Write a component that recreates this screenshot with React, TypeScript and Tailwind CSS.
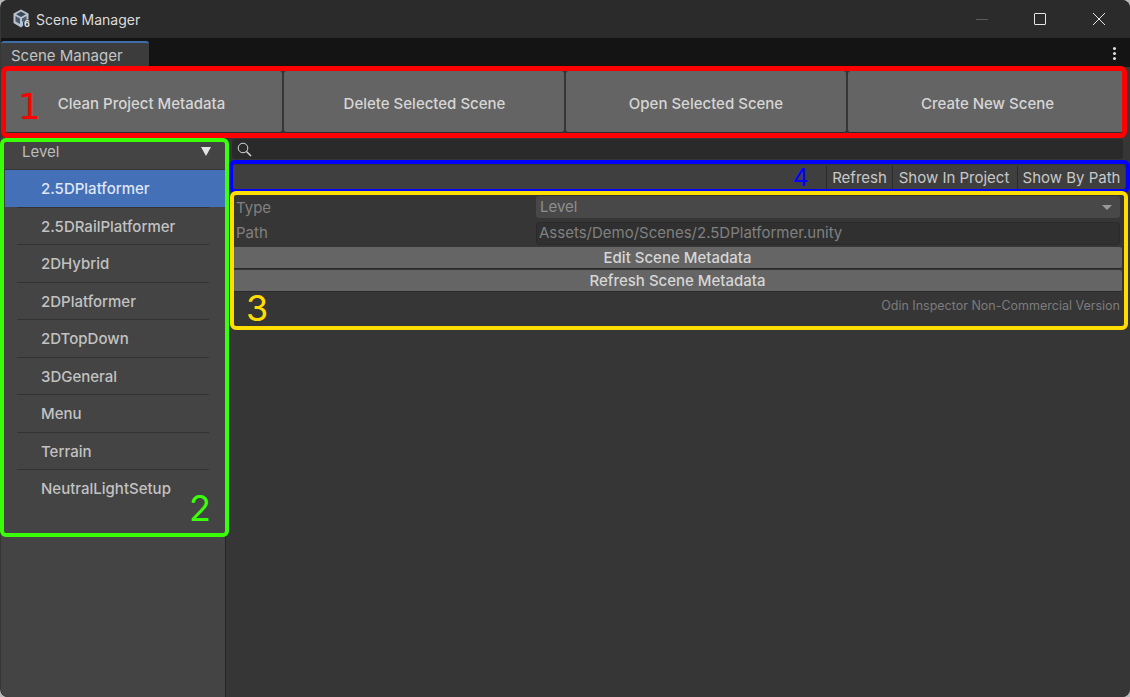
const scenes = [
  "2.5DPlatformer",
  "2.5DRailPlatformer",
  "2DHybrid",
  "2DPlatformer",
  "2DTopDown",
  "3DGeneral",
  "Menu",
  "Terrain",
  "NeutralLightSetup",
];

const actions = [
  { label: "Clean Project Metadata", box: "w-[277px] pr-[4px]" },
  { label: "Delete Selected Scene", box: "w-[280px] pl-[1px]" },
  { label: "Open Selected Scene", box: "w-[280px]" },
  { label: "Create New Scene", box: "flex-1 pl-[3px]" },
];

function UnityLogo() {
  return (
    <svg width="20" height="20" viewBox="0 0 20 20" className="shrink-0">
      <path d="M9 0.5 L16.5 4.5 L16.5 12 L9 18.5 L1.5 14 L1.5 4.5 Z" fill="#b9c3d0" />
      <path d="M9 2.5 L14 5.2 L9 8 L4 5.2 Z" fill="#3c4a5c" />
      <path d="M3.5 7 L8 9.6 L8 15 L3.5 12.4 Z" fill="#4d5a6b" />
      <path d="M10 9.6 L14.5 7 L14.5 10 L10 13 Z" fill="#4d5a6b" />
      <circle cx="15" cy="14.5" r="4" fill="#2a2a2a" />
      <text x="15" y="18" fontSize="9" fontWeight="700" fill="#e4e4e4" textAnchor="middle" fontFamily="Inter, sans-serif">
        6
      </text>
    </svg>
  );
}

function TitleBar() {
  return (
    <div className="flex h-[38px] items-center bg-[#2b2b2b] pl-[11px]">
      <UnityLogo />
      <span className="ml-[4px] text-[14px] text-[#dcdcdc]">Scene Manager</span>
      <div className="ml-auto flex items-center">
        <div className="mr-[46px] h-px w-3 bg-[#5c5c5c]" />
        <div className="mr-[46px] h-3 w-3 rounded-[1px] border border-[#e6e6e6]" />
        <svg width="14" height="14" viewBox="0 0 14 14" className="mr-[24px] stroke-[#e6e6e6]">
          <path d="M1 1 L13 13 M13 1 L1 13" strokeWidth="1" fill="none" />
        </svg>
      </div>
    </div>
  );
}

function TabStrip() {
  return (
    <div className="flex h-[29px] items-end bg-[#141414] pr-[14px]">
      <div className="flex h-[26px] w-[148px] items-center rounded-t-[3px] border-t-2 border-[#3f6da8] bg-[#3c3c3c] pl-[10px] pt-[3px] text-[15px] text-[#c4c4c4]">
        Scene Manager
      </div>
      <div className="mb-[7px] ml-auto flex flex-col gap-[2px]">
        <span className="h-[3px] w-[3px] rounded-full bg-[#e0e0e0]" />
        <span className="h-[3px] w-[3px] rounded-full bg-[#e0e0e0]" />
        <span className="h-[3px] w-[3px] rounded-full bg-[#e0e0e0]" />
      </div>
    </div>
  );
}

function ActionBar() {
  return (
    <div className="flex h-[70px] gap-[2px] bg-[#363636] py-1 pl-[4px] pr-[6px]">
      {actions.map((a) => (
        <button
          key={a.label}
          className={`${a.box} rounded-[3px] border-b border-[#2a2a2a] bg-[#646464] pt-[5px] text-[15px] font-medium text-[#d6d6d6]`}
        >
          {a.label}
        </button>
      ))}
    </div>
  );
}

function Sidebar() {
  return (
    <aside className="flex w-[225px] shrink-0 flex-col rounded-bl-[8px] border-r border-[#242424] bg-[#444444]">
      <div className="flex h-[33px] items-center justify-between border-b border-[#333333] pb-[2px] pl-[21px] pr-[14px] text-[15px] text-[#bdbdbd]">
        <span>Level</span>
        <svg width="10" height="9" viewBox="0 0 10 9" className="mb-[2px] fill-[#e4e4e4]">
          <path d="M0 0 H10 L5 9 Z" />
        </svg>
      </div>
      <div className="flex flex-col pl-[4px]">
        {scenes.map((name, i) => (
          <div key={name}>
            <div
              className={
                i === 0
                  ? "flex h-[36.5px] items-center bg-[#4470b8] pl-[36px] pt-[2px] text-[15px] font-medium text-[#dfe6f3]"
                  : "flex h-[36.5px] items-center pl-[36px] pt-[2px] text-[15px] font-medium text-[#c2c2c2]"
              }
            >
              {name}
            </div>
            {i < scenes.length - 1 && <div className="ml-[12px] h-px w-[192px] bg-[#333333]" />}
          </div>
        ))}
      </div>
    </aside>
  );
}

function Toolbar() {
  return (
    <div className="ml-[6px] mr-[5px] mt-[6px] flex h-[25px] rounded-[3px] bg-[#3f3f3f] pt-px text-[15px] text-[#c8c8c8]">
      <div className="flex-1" />
      <div className="flex w-[66px] items-center justify-center border-l border-[#2a2a2a]">Refresh</div>
      <div className="flex w-[125px] items-center justify-center border-l border-[#2a2a2a] pr-[2px]">Show In Project</div>
      <div className="flex w-[108px] items-center justify-center border-l border-[#2a2a2a]">Show By Path</div>
    </div>
  );
}

function Inspector() {
  return (
    <div className="mt-[5px] flex flex-col pl-[7px] pr-[8px] text-[15px]">
      <div className="mr-[2px] flex h-[24px] items-center gap-[3px]">
        <span className="w-[300px] pl-[3px] pt-[2px] text-[#808080]">Type</span>
        <div className="flex h-[22px] flex-1 items-center justify-between rounded-[3px] bg-[#484848] pl-[4px] pr-[8px] text-[#8e8e8e]">
          Level
          <svg width="10" height="5" viewBox="0 0 10 5" className="fill-[#9a9a9a]">
            <path d="M0 0 H10 L5 5 Z" />
          </svg>
        </div>
      </div>
      <div className="mr-[2px] mt-[2px] flex h-[24px] items-center gap-[3px]">
        <span className="w-[300px] pl-[3px] pt-[1px] text-[#808080]">Path</span>
        <div className="flex h-[23px] flex-1 items-center rounded-[3px] border border-[#2a2a2a] bg-[#303030] pl-[2px] pt-[1px] text-[#808080]">
          Assets/Demo/Scenes/2.5DPlatformer.unity
        </div>
      </div>
      <button className="mt-[2px] h-[22px] rounded-[2px] border-b border-[#2a2a2a] bg-[#656565] font-medium text-[#d6d6d6]">
        Edit Scene Metadata
      </button>
      <button className="mt-[1px] h-[22px] rounded-[2px] border-b border-[#2a2a2a] bg-[#656565] font-medium text-[#d6d6d6]">
        Refresh Scene Metadata
      </button>
      <div className="mr-[2px] mt-[5px] text-right text-[12.5px] text-[#7c7c7c]">Odin Inspector Non-Commercial Version</div>
    </div>
  );
}

// hand-drawn markup boxes sitting on top of the window
function Callouts() {
  return (
    <>
      <div className="absolute left-px top-[66px] h-[72px] w-[1126px] rounded-[6px] border-[5px] border-[#ff0000]" />
      <div className="absolute left-0 top-[138px] h-[399px] w-[229px] rounded-[6px] border-[4px] border-[#39ff08]" />
      <div className="absolute left-[229px] top-[160px] h-[33px] w-[901px] rounded-[6px] border-[4px] border-[#0000ff]" />
      <div className="absolute left-[230px] top-[191px] h-[139px] w-[898px] rounded-[6px] border-[4px] border-[#ffdd00]" />
      <span className="absolute left-[18px] top-[85px] font-['DejaVu_Sans'] text-[36px] leading-[44px] text-[#ff0000]">1</span>
      <span className="absolute left-[189px] top-[486px] text-[36px] leading-[44px] text-[#39ff08]">2</span>
      <span className="absolute left-[246px] top-[286px] text-[36px] leading-[44px] text-[#ffdd00]">3</span>
      <span className="absolute left-[793px] top-[163px] text-[24px] leading-[29px] text-[#0000ff]">4</span>
    </>
  );
}

export default function App() {
  return (
    <div className="relative h-[697px] w-[1130px] overflow-hidden bg-[#b8b8b8] font-['Inter',sans-serif]">
      <div className="flex h-full flex-col overflow-hidden rounded-[8px] bg-[#363636] pl-px">
        <TitleBar />
        <TabStrip />
        <ActionBar />
        <div className="flex flex-1 bg-[#363636]">
          <Sidebar />
          <main className="flex min-w-0 flex-1 flex-col pt-[2px]">
            <div className="ml-[6px] mr-[7px] flex h-[20px] items-center rounded-[3px] bg-[#2a2a2a] pl-[5px]">
              <svg width="15" height="15" viewBox="0 0 15 15" fill="none" className="stroke-[#d8d8d8]">
                <circle cx="6" cy="6" r="4.8" strokeWidth="1" />
                <path d="M9.5 9.5 L14 14" strokeWidth="1.4" />
              </svg>
            </div>
            <Toolbar />
            <Inspector />
          </main>
        </div>
      </div>
      <Callouts />
    </div>
  );
}
